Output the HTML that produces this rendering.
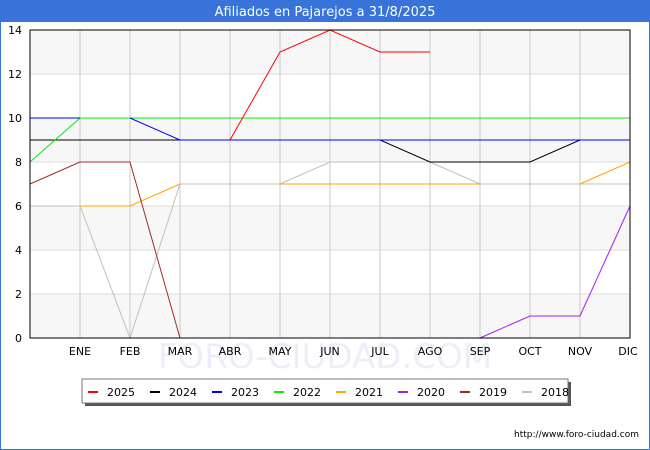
<!DOCTYPE html>
<html><head><style>
body{margin:0;width:650px;height:450px;overflow:hidden;background:#fff;font-family:"DejaVu Sans","Liberation Sans",sans-serif}
</style></head><body>
<svg width="650" height="450" xmlns="http://www.w3.org/2000/svg" style="display:block">
<rect x="0.5" y="0.5" width="649" height="449" fill="#fff" stroke="#3773d9"/>
<rect x="0" y="0" width="650" height="22" fill="#3773d9"/>
<text x="325" y="16" font-size="13" fill="#fff" text-anchor="middle" font-family="DejaVu Sans,sans-serif">Afiliados en Pajarejos a 31/8/2025</text>
<g fill="#f7f7f7">
<rect x="30" y="30" width="600" height="44"/><rect x="30" y="118" width="600" height="44"/><rect x="30" y="206" width="600" height="44"/><rect x="30" y="294" width="600" height="44"/>
</g>
<g stroke="#dcdcdc" stroke-width="1">
<line x1="30" x2="630" y1="74" y2="74"/><line x1="30" x2="630" y1="118" y2="118"/><line x1="30" x2="630" y1="162" y2="162"/><line x1="30" x2="630" y1="206" y2="206"/><line x1="30" x2="630" y1="250" y2="250"/><line x1="30" x2="630" y1="294" y2="294"/>
</g>
<g stroke="#c8c8c8" stroke-width="1">
<line x1="80" x2="80" y1="30" y2="338"/><line x1="130" x2="130" y1="30" y2="338"/><line x1="180" x2="180" y1="30" y2="338"/><line x1="230" x2="230" y1="30" y2="338"/><line x1="280" x2="280" y1="30" y2="338"/><line x1="330" x2="330" y1="30" y2="338"/><line x1="380" x2="380" y1="30" y2="338"/><line x1="430" x2="430" y1="30" y2="338"/><line x1="480" x2="480" y1="30" y2="338"/><line x1="530" x2="530" y1="30" y2="338"/><line x1="580" x2="580" y1="30" y2="338"/>
</g>
<text x="325" y="368" font-size="34" fill="#eeeefa" text-anchor="middle" font-family="DejaVu Sans,sans-serif">FORO-CIUDAD.COM</text>
<g fill="none" stroke-width="1">
<polyline stroke="#c0c0c0" points="30,206 80,206 130,338 180,184 280,184 330,162 430,162 480,184 630,184"/>
<polyline stroke="#ffa500" points="80,206 130,206 180,184 M280,184"/>
<polyline stroke="#ffa500" points="280,184 480,184"/>
<polyline stroke="#ffa500" points="580,184 630,162"/>
<polyline stroke="#a52a2a" points="30,184 80,162 130,162 180,338"/>
<polyline stroke="#a020f0" points="480,338 530,316 580,316 630,206"/>
<polyline stroke="#000" points="30,140 380,140 430,162 530,162 580,140 630,140"/>
<polyline stroke="#00ee00" points="30,162 80,118 630,118"/>
<polyline stroke="#0000ff" points="30,118 80,118 M130,118"/>
<polyline stroke="#0000ff" points="130,118 180,140 630,140"/>
<polyline stroke="#ff0000" points="230,140 280,52 330,30 380,52 430,52"/>
</g>
<rect x="30" y="30" width="600" height="308" fill="none" stroke="#000"/>
<line x1="30" x2="80" y1="118" y2="118" stroke="#0000ff"/>
<g font-size="11" fill="#000" text-anchor="end">
<text x="22" y="34">14</text><text x="22" y="78">12</text><text x="22" y="122">10</text><text x="22" y="166">8</text><text x="22" y="210">6</text><text x="22" y="254">4</text><text x="22" y="298">2</text><text x="22" y="342">0</text>
</g>
<g font-size="11" fill="#000" text-anchor="middle">
<text x="80" y="355">ENE</text><text x="130" y="355">FEB</text><text x="180" y="355">MAR</text><text x="230" y="355">ABR</text><text x="280" y="355">MAY</text><text x="330" y="355">JUN</text><text x="380" y="355">JUL</text><text x="430" y="355">AGO</text><text x="480" y="355">SEP</text><text x="530" y="355">OCT</text><text x="580" y="355">NOV</text><text x="628" y="355">DIC</text>
</g>
<rect x="85" y="382" width="486" height="24" fill="#555"/>
<rect x="82" y="379" width="486" height="24" fill="#fff" stroke="#777"/>
<g stroke-width="2">
<line x1="88" x2="98" y1="392" y2="392" stroke="#ff0000"/>
<line x1="150" x2="160" y1="392" y2="392" stroke="#000"/>
<line x1="212" x2="222" y1="392" y2="392" stroke="#0000ff"/>
<line x1="274" x2="284" y1="392" y2="392" stroke="#00ee00"/>
<line x1="336" x2="346" y1="392" y2="392" stroke="#ffa500"/>
<line x1="398" x2="408" y1="392" y2="392" stroke="#a020f0"/>
<line x1="460" x2="470" y1="392" y2="392" stroke="#a52a2a"/>
<line x1="522" x2="532" y1="392" y2="392" stroke="#c0c0c0"/>
</g>
<g font-size="11" fill="#000">
<text x="107" y="396">2025</text><text x="169" y="396">2024</text><text x="231" y="396">2023</text><text x="293" y="396">2022</text><text x="355" y="396">2021</text><text x="417" y="396">2020</text><text x="479" y="396">2019</text><text x="541" y="396">2018</text>
</g>
<text x="639" y="437" font-size="9" fill="#000" text-anchor="end">http://www.foro-ciudad.com</text>
</svg>
</body></html>
